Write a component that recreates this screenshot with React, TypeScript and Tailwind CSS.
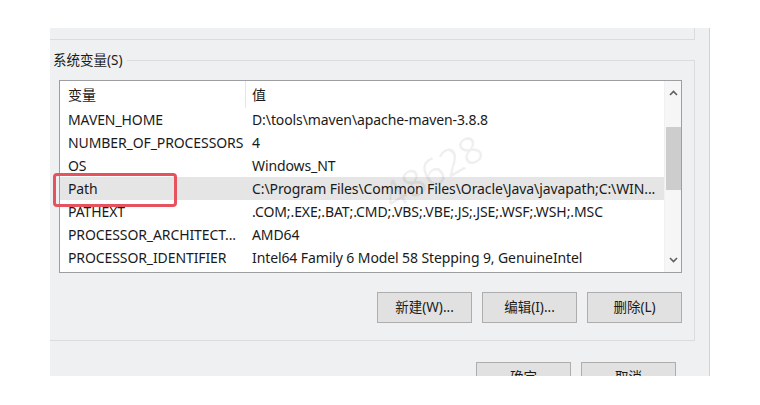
import React from "react";

const rows = [
  { name: "MAVEN_HOME", value: "D:\\tools\\maven\\apache-maven-3.8.8" },
  { name: "NUMBER_OF_PROCESSORS", value: "4" },
  { name: "OS", value: "Windows_NT" },
  { name: "Path", value: "C:\\Program Files\\Common Files\\Oracle\\Java\\javapath;C:\\WIN...", selected: true },
  { name: "PATHEXT", value: ".COM;.EXE;.BAT;.CMD;.VBS;.VBE;.JS;.JSE;.WSF;.WSH;.MSC" },
  { name: "PROCESSOR_ARCHITECT...", value: "AMD64" },
  { name: "PROCESSOR_IDENTIFIER", value: "Intel64 Family 6 Model 58 Stepping 9, GenuineIntel" },
];

const font = { fontFamily: '"Noto Sans", "Noto Sans CJK SC", sans-serif' };

function Btn({ label }: { label: string }) {
  return (
    <button className="w-[95px] h-[31px] bg-[#e1e1e1] border border-[#adadad] text-[13.5px] text-[#1a1a1a] flex items-center justify-center">
      {label}
    </button>
  );
}

export default function App() {
  return (
    <div className="w-[760px] h-[405px] bg-white pt-[28px] pl-[50px] overflow-hidden" style={font}>
      <div className="w-[660px] h-[348px] bg-[#eff0f1] border-r border-[#d2d2d2] pr-[14px] overflow-hidden">
        {/* previous group box stub */}
        <div className="h-[12px] border-b border-r border-[#dadcde]" />

        {/* system variables group */}
        <fieldset className="mt-[14px] h-[287px] border border-l-0 border-[#dadcde] relative">
          <legend className="text-[13.5px] text-[#1a1a1a] leading-none -ml-[1px] pr-1 pl-[4px]">系统变量(S)</legend>

          <div className="ml-[9px] mr-[12px] mt-[12px] h-[193px] bg-white border border-[#9c9ea2] flex relative">
            <div className="flex-1 flex flex-col">
              <div className="h-[27px] flex items-center text-[14px] text-[#1a1a1a]">
                <div className="w-[186px] h-full pl-[8px] flex items-center border-r border-[#e5e5e5]">变量</div>
                <div className="pl-[6px]">值</div>
              </div>
              {rows.map((r) => (
                <div
                  key={r.name}
                  className={`h-[23px] flex items-center text-[14px] text-[#1a1a1a] whitespace-nowrap ${r.selected ? "bg-[#e5e5e5]" : ""}`}
                >
                  <div className="w-[186px] pl-[8px] tracking-[-0.1px]">{r.name}</div>
                  <div className="pl-[6px] tracking-[-0.1px]">{r.value}</div>
                </div>
              ))}
            </div>

            {/* scrollbar */}
            <div className="w-[17px] bg-[#f6f6f6] border-l border-[#f0f0f0] flex flex-col items-center">
              <div className="h-[24px] flex items-center justify-center">
                <svg width="9" height="6" viewBox="0 0 9 6">
                  <path d="M1 5 L4.5 1.5 L8 5" fill="none" stroke="#606060" strokeWidth="1.6" />
                </svg>
              </div>
              <div className="mt-[22px] w-[15px] h-[63px] bg-[#cdcdcd]" />
              <div className="flex-1" />
              <div className="h-[24px] flex items-center justify-center">
                <svg width="9" height="6" viewBox="0 0 9 6">
                  <path d="M1 1 L4.5 4.5 L8 1" fill="none" stroke="#606060" strokeWidth="1.6" />
                </svg>
              </div>
            </div>

            {/* watermark */}
            <span className="absolute left-[318px] top-[62px] -rotate-[30deg] text-[38px] text-black/[0.06] pointer-events-none select-none">
              48628
            </span>

            {/* red highlight around Path */}
            <div className="absolute left-[-7px] top-[92px] w-[124px] h-[34px] border-[3px] border-[#e5535f] rounded-[4px]" />
          </div>

          <div className="mt-[19px] mr-[12px] flex justify-end gap-[10px]">
            <Btn label="新建(W)..." />
            <Btn label="编辑(I)..." />
            <Btn label="删除(L)" />
          </div>
        </fieldset>

        <div className="mt-[21px] mr-[19px] flex justify-end gap-[10px]">
          <Btn label="确定" />
          <Btn label="取消" />
        </div>
      </div>
    </div>
  );
}
